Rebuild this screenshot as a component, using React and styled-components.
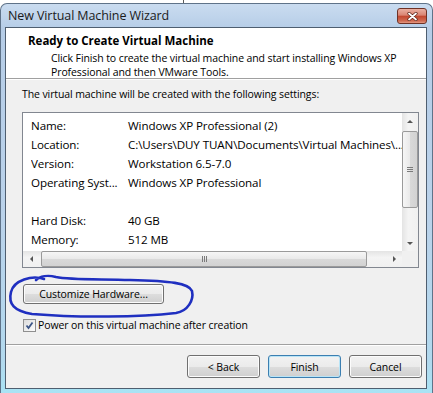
import React from 'react'
import styled, { createGlobalStyle } from 'styled-components'

const FONT = `"Open Sans", "Noto Sans", "DejaVu Sans", sans-serif`

const GlobalStyle = createGlobalStyle`
  html, body {
    margin: 0;
    padding: 0;
    background: #fff;
  }
  body {
    font-family: ${FONT};
    font-size: 10.5px;
    letter-spacing: -0.1px;
    color: #000;
  }
`

const Screen = styled.div`
  position: relative;
  width: 433px;
  height: 393px;
  overflow: hidden;
  box-sizing: border-box;
  padding-top: 3px;
  background: linear-gradient(to right, #fff 183px, #5a5a5a 183px, #5a5a5a 184px, #fff 184px);
`

const Window = styled.div`
  height: 390px;
  box-sizing: border-box;
  display: flex;
  flex-direction: column;
  padding: 0 5px 4px 4px;
  border: 1px solid #5f7389;
  border-bottom: none;
  border-radius: 7px 7px 0 0;
  background: linear-gradient(to bottom, #cadcf0 0, #b6cde7 24px, #bad2ea 55%, #b2d9ee 92%, #a9e3f4 100%);
`

const TitleBar = styled.div`
  height: 23px;
  display: flex;
  align-items: flex-start;
  justify-content: space-between;
  padding-left: 3px;
`

const Title = styled.span`
  line-height: 23px;
  font-size: 12.5px;
  letter-spacing: -0.1px;
  color: #1b1b1b;
`

const CloseButton = styled.div`
  width: 30px;
  height: 16px;
  margin-top: 4px;
  box-sizing: border-box;
  border: 1px solid #6e3226;
  border-radius: 3px;
  display: flex;
  align-items: center;
  justify-content: center;
  background: linear-gradient(to bottom, #eab0a2 0%, #d98472 45%, #c2462e 50%, #cf6a52 85%, #e59a83 100%);
`

const Client = styled.div`
  flex: 1;
  display: flex;
  flex-direction: column;
  border: 1px solid #4e5e70;
  background: #f0f0f0;
`

const Header = styled.div`
  height: 51px;
  box-sizing: border-box;
  padding: 5px 0 0 22px;
  background: #fff;
  border-bottom: 1px solid #a0a0a0;
  box-shadow: 0 1px 0 #fff;
  white-space: nowrap;
`

const HeaderTitle = styled.div`
  font-weight: bold;
  font-size: 11.5px;
  letter-spacing: 0;
  line-height: 16px;
`

const HeaderDesc = styled.div`
  margin-top: 2px;
  padding-left: 23px;
  line-height: 14px;
`

const Body = styled.div`
  flex: 1;
  display: flex;
  flex-direction: column;
  padding: 8px 0 0 16px;
`

const Intro = styled.div`
  line-height: 14px;
`

const ListBox = styled.div`
  margin-top: 11px;
  width: 397px;
  height: 156px;
  box-sizing: border-box;
  border: 1px solid #828790;
  background: #fff;
  display: grid;
  grid-template-columns: 1fr 16px;
  grid-template-rows: 1fr 16px;
  font-size: 11.6px;
`

const Rows = styled.div`
  padding-top: 3px;
  overflow: hidden;
`

const Row = styled.div`
  display: flex;
  height: 19px;
  line-height: 19px;
  padding-left: 8px;
  white-space: nowrap;
`

const Label = styled.span`
  width: 97px;
  flex: none;
  overflow: hidden;
`

const VScroll = styled.div`
  display: flex;
  flex-direction: column;
  background: linear-gradient(to right, #e4e4e4, #f4f4f4 40%, #f0f0f0);
`

const HScroll = styled.div`
  display: flex;
  background: linear-gradient(to bottom, #e4e4e4, #f4f4f4 40%, #f0f0f0);
`

const Corner = styled.div`
  background: #f0f0f0;
`

const ArrowBox = styled.div`
  flex: none;
  width: 16px;
  height: 16px;
  display: flex;
  align-items: center;
  justify-content: center;
`

const Arrow = styled.div`
  width: 0;
  height: 0;
  border: 3.5px solid transparent;
  ${(p) => p.$dir === 'up' && 'border-bottom: 3.5px solid #555; border-top-width: 0;'}
  ${(p) => p.$dir === 'down' && 'border-top: 3.5px solid #555; border-bottom-width: 0;'}
  ${(p) => p.$dir === 'left' && 'border-right: 3.5px solid #555; border-left-width: 0;'}
  ${(p) => p.$dir === 'right' && 'border-left: 3.5px solid #555; border-right-width: 0;'}
`

const Track = styled.div`
  flex: 1;
  display: flex;
  flex-direction: ${(p) => (p.$vertical ? 'column' : 'row')};
`

const Thumb = styled.div`
  box-sizing: border-box;
  border: 1px solid #9a9a9a;
  border-radius: 2px;
  display: flex;
  align-items: center;
  justify-content: center;
  gap: 1px;
  flex-direction: ${(p) => (p.$vertical ? 'column' : 'row')};
  ${(p) =>
    p.$vertical
      ? 'margin: 2px 0 0 0; width: 16px; height: 77px; background: linear-gradient(to right, #f6f6f6, #e9e9e9 50%, #d9d9d9 51%, #d2d2d2);'
      : 'margin: 0 0 0 2px; width: 326px; height: 16px; background: linear-gradient(to bottom, #f6f6f6, #e9e9e9 50%, #d9d9d9 51%, #d2d2d2);'}
`

const Grip = styled.span`
  background: #7a7a7a;
  ${(p) => (p.$vertical ? 'width: 6px; height: 1px;' : 'width: 1px; height: 6px;')}
`

const Button = styled.div`
  box-sizing: border-box;
  width: ${(p) => p.$w || 73}px;
  height: ${(p) => p.$h || 23}px;
  display: flex;
  align-items: center;
  justify-content: center;
  border: 1px solid ${(p) => (p.$default ? '#3c7fb1' : '#707070')};
  border-radius: 3px;
  background: linear-gradient(to bottom, #f2f2f2 0%, #ebebeb 50%, #dddddd 51%, #cfcfcf 100%);
  box-shadow: inset 0 0 0 1px ${(p) => (p.$default ? '#b9e4f6' : '#fcfcfc')};
  color: #000;
`

const CustomizeButton = styled(Button)`
  margin: 16px 0 0 1px;
`

const CheckRow = styled.label`
  margin: 15px 0 0 1px;
  display: flex;
  align-items: center;
  gap: 2px;
  height: 13px;
  line-height: 13px;
`

const CheckBox = styled.span`
  width: 13px;
  height: 13px;
  box-sizing: border-box;
  border: 1px solid #8f8f8f;
  background: linear-gradient(135deg, #dcdcdc, #fdfdfd);
  display: flex;
  align-items: center;
  justify-content: center;
`

const Footer = styled.div`
  margin-top: auto;
  height: 44px;
  box-sizing: border-box;
  border-top: 1px solid #a0a0a0;
  box-shadow: inset 0 1px 0 #fff;
  padding: 10px 4px 0 0;
  display: flex;
  justify-content: flex-end;
  gap: 8px;
`

const Scribble = styled.svg`
  position: absolute;
  left: 0;
  top: 0;
  pointer-events: none;
`

const settings = [
  ['Name:', 'Windows XP Professional (2)'],
  ['Location:', 'C:\\Users\\DUY TUAN\\Documents\\Virtual Machines\\...'],
  ['Version:', 'Workstation 6.5-7.0'],
  ['Operating Syst...', 'Windows XP Professional'],
  ['', ''],
  ['Hard Disk:', '40 GB'],
  ['Memory:', '512 MB'],
]

export default function App() {
  return (
    <Screen>
      <GlobalStyle />
      <Window>
        <TitleBar>
          <Title>New Virtual Machine Wizard</Title>
          <CloseButton>
            <svg width="11" height="9" viewBox="0 0 11 9">
              <path d="M2 1.5 L9 7.5 M9 1.5 L2 7.5" stroke="#5a2116" strokeWidth="3.2" strokeLinecap="round" />
              <path d="M2 1.5 L9 7.5 M9 1.5 L2 7.5" stroke="#fff" strokeWidth="1.8" strokeLinecap="round" />
            </svg>
          </CloseButton>
        </TitleBar>
        <Client>
          <Header>
            <HeaderTitle>Ready to Create Virtual Machine</HeaderTitle>
            <HeaderDesc>
              Click Finish to create the virtual machine and start installing Windows XP
              <br />
              Professional and then VMware Tools.
            </HeaderDesc>
          </Header>
          <Body>
            <Intro>The virtual machine will be created with the following settings:</Intro>
            <ListBox>
              <Rows>
                {settings.map(([k, v], i) => (
                  <Row key={i}>
                    <Label>{k}</Label>
                    <span>{v}</span>
                  </Row>
                ))}
              </Rows>
              <VScroll>
                <ArrowBox>
                  <Arrow $dir="up" />
                </ArrowBox>
                <Track $vertical>
                  <Thumb $vertical>
                    <Grip $vertical />
                    <Grip $vertical />
                    <Grip $vertical />
                  </Thumb>
                </Track>
                <ArrowBox>
                  <Arrow $dir="down" />
                </ArrowBox>
              </VScroll>
              <HScroll>
                <ArrowBox>
                  <Arrow $dir="left" />
                </ArrowBox>
                <Track>
                  <Thumb>
                    <Grip />
                    <Grip />
                    <Grip />
                  </Thumb>
                </Track>
                <ArrowBox>
                  <Arrow $dir="right" />
                </ArrowBox>
              </HScroll>
              <Corner />
            </ListBox>
            <CustomizeButton $w={141} $h={20}>
              Customize Hardware...
            </CustomizeButton>
            <CheckRow>
              <CheckBox>
                <svg width="9" height="9" viewBox="0 0 9 9">
                  <path d="M1.5 4.5 L3.5 7 L7.5 1.5" fill="none" stroke="#3b5587" strokeWidth="1.8" />
                </svg>
              </CheckBox>
              Power on this virtual machine after creation
            </CheckRow>
          </Body>
          <Footer>
            <Button>&lt; Back</Button>
            <Button $default>Finish</Button>
            <Button>Cancel</Button>
          </Footer>
        </Client>
      </Window>
      <Scribble width="433" height="393" viewBox="0 0 433 393">
        <path
          d="M44 279 C 32 275, 14 280, 11 292 C 8 304, 14 311, 32 314 C 80 318, 140 317, 176 313 C 188 311, 194 300, 192 291 C 189 283, 170 281, 130 280 C 100 279, 70 280, 56 277 C 48 275, 40 276, 36 280"
          fill="none"
          stroke="#1f2fc0"
          strokeWidth="2.6"
          strokeLinecap="round"
        />
      </Scribble>
    </Screen>
  )
}
